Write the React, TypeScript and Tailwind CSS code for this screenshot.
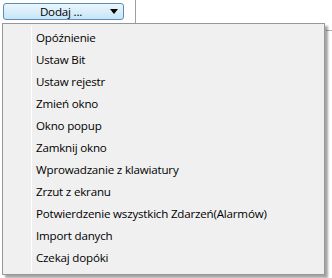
import { useState } from "react"

const ITEMS = [
  "Opóźnienie",
  "Ustaw Bit",
  "Ustaw rejestr",
  "Zmień okno",
  "Okno popup",
  "Zamknij okno",
  "Wprowadzanie z klawiatury",
  "Zrzut z ekranu",
  "Potwierdzenie wszystkich Zdarzeń(Alarmów)",
  "Import danych",
  "Czekaj dopóki",
]

const App = () => {
  const [open] = useState(true)

  return (
    <div
      className="relative w-[332px] h-[278px] bg-white overflow-hidden text-[12px] text-black"
      style={{ fontFamily: '"Open Sans", "Noto Sans", sans-serif' }}
    >
      {/* toolbar row */}
      <div className="flex h-[24px]">
        <button className="mt-[3px] ml-[3px] w-[121px] h-[17px] flex items-center rounded-[3px] border border-[#5b8db8] bg-gradient-to-b from-[#eaf6fd] to-[#c7e5f6] text-[11.6px] tracking-[-0.2px] leading-none">
          <span className="flex-1 text-center pl-[8px]">Dodaj ...</span>
          <svg width="8" height="5" viewBox="0 0 8 5" className="mr-[5px]">
            <path d="M0 0H8L4 5Z" fill="#000" />
          </svg>
        </button>
        <div className="ml-[11px] w-px h-full bg-[#a0a0a0]" />
      </div>

      {/* panel edge peeking out behind the menu */}
      <div className="absolute right-0 top-[30px] w-[6px] h-px bg-[#b0b0b0]" />

      {/* dropdown menu */}
      {open && (
        <div className="absolute left-[2px] top-[23px] w-[323px] h-[252px] bg-[#f0f0f0] border border-[#979797] shadow-[3px_3px_2px_rgba(0,0,0,0.35)] pt-[3px] text-[11.6px] tracking-[-0.2px]">
          <div className="absolute left-[28px] top-[2px] bottom-[2px] w-px bg-[#e2e3e3] border-r border-white" />
          {ITEMS.map((item) => (
            <div key={item} className="relative h-[22px] flex items-center pl-[33px] whitespace-nowrap">
              {item}
            </div>
          ))}
        </div>
      )}
    </div>
  )
}

export default App
